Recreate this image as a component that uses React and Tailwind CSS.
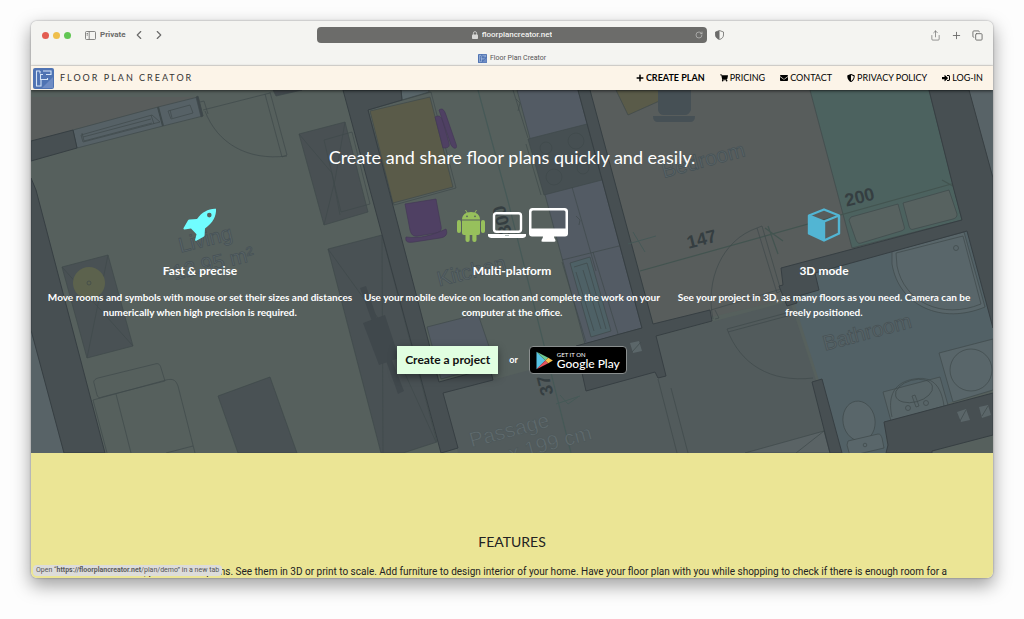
import {
  FaEnvelope,
  FaPlus,
  FaShieldAlt,
  FaShoppingCart,
  FaSignInAlt,
} from "react-icons/fa";
import { ChevronLeft, ChevronRight, Copy, Plus, RotateCw, Share } from "lucide-react";

const navLinks = [
  { label: "CREATE PLAN", Icon: FaPlus, strong: true },
  { label: "PRICING", Icon: FaShoppingCart },
  { label: "CONTACT", Icon: FaEnvelope },
  { label: "PRIVACY POLICY", Icon: FaShieldAlt },
  { label: "LOG-IN", Icon: FaSignInAlt },
];

const Logo = ({ className }) => (
  <svg viewBox="0 0 21 21" className={className} aria-hidden="true">
    <rect width="21" height="21" rx="2" fill="#4f73b3" />
    <path d="M20 9 9 20h11z" fill="#6f8cc4" />
    <path
      d="M7 3H3.500v15H8v-4.500M7 3v2.500M10 3h8v3.500h-5M10 6.500H7.500v5H10M8 13.500v-2h6.500V10"
      fill="none"
      stroke="#d5e4f7"
      strokeWidth="1.100"
    />
  </svg>
);

const RocketIcon = () => (
  <svg viewBox="0 0 34 34" className="h-[34px] w-[34px]" aria-hidden="true">
    <path
      fillRule="evenodd"
      d="M33 .8C26 .3 19 4 14 11l-7.500.500c-.8 0-1.200.4-1.600 1L.6 20c-.4.900 0 1.500.9 1.400l6.500-.9 5.500 5.800-1.400 5.400c-.2 1 .4 1.400 1.300 1l7.200-4c.7-.4 1-.8 1-1.600l.400-6.600C30 15 33.500 8 33 .8zM26.300 4.800a2.300 2.300 0 1 1 0 4.600 2.300 2.300 0 0 1 0-4.600z"
      fill="#70fdff"
    />
  </svg>
);

const AndroidIcon = () => (
  <svg viewBox="0 0 28 33" className="h-[33px] w-7" aria-hidden="true">
    <g fill="#97c05c">
      <path d="M5 10.500C5 6 8.500 3 14 3s9 3 9 7.500z" />
      <path d="M5 11.500h18V24a2 2 0 0 1-2 2H7a2 2 0 0 1-2-2z" />
      <rect x="0" y="11" width="4" height="13" rx="2" />
      <rect x="24" y="11" width="4" height="13" rx="2" />
      <rect x="8.500" y="22" width="4.200" height="11" rx="2" />
      <rect x="15.300" y="22" width="4.200" height="11" rx="2" />
    </g>
    <path d="m8.500 1 2 3.500M19.500 1l-2 3.500" stroke="#97c05c" strokeWidth=".9" />
    <circle cx="10" cy="7.300" r=".9" fill="#56605d" />
    <circle cx="18" cy="7.300" r=".9" fill="#56605d" />
  </svg>
);

const LaptopIcon = () => (
  <svg viewBox="0 0 38 27" className="h-[27px] w-[38px]" aria-hidden="true">
    <rect x="6" y="1.200" width="27" height="18.500" rx="2.500" fill="none" stroke="#fff" strokeWidth="2.400" />
    <path d="M0 22h38v1.500c0 1.500-1.500 2.500-3.500 2.500h-31C1.500 26 0 25 0 23.500z" fill="#fff" />
    <path d="M17 23.500h4" stroke="#9aa" strokeWidth=".8" />
  </svg>
);

const DesktopIcon = () => (
  <svg viewBox="0 0 39 34" className="h-[34px] w-[39px]" aria-hidden="true">
    <path
      fillRule="evenodd"
      d="M3.500 0h32A3.500 3.500 0 0 1 39 3.500v22a3 3 0 0 1-3 3H25c0 2 1.500 2.500 1.500 4 0 .8-.5 1.200-1 1.200h-12c-.6 0-1-.4-1-1.200 0-1.500 1.500-2 1.500-4H3a3 3 0 0 1-3-3v-22A3.500 3.500 0 0 1 3.500 0zM4 2.500A1.500 1.500 0 0 0 2.500 4v16.500h34V4A1.500 1.500 0 0 0 35 2.500z"
      fill="#fff"
    />
  </svg>
);

const CubeIcon = () => (
  <svg viewBox="0 0 34 34" className="h-[34px] w-[34px]" aria-hidden="true">
    <path
      d="M17 1.500 32 7.500v18L17 32.500 2 25.500v-18zM2 7.500l15 6 15-6M17 13.500v19"
      fill="none"
      stroke="#52b5d3"
      strokeWidth="2.400"
      strokeLinejoin="round"
    />
    <path d="m2 7.500 15 6v19L2 25.500z" fill="#52b5d3" />
  </svg>
);

const PlayIcon = () => (
  <svg viewBox="0 0 17 19" className="h-[19px] w-[17px]" aria-hidden="true">
    <path d="M.5.800v17.400L9.300 9.500z" fill="#58c3e4" />
    <path d="M.5.800 12.300 6.700l-3 2.800z" fill="#6fc892" />
    <path d="M.5 18.200 12.300 12.300l-3-2.800z" fill="#e4525d" />
    <path d="m12.300 6.700 4.500 2.800-4.500 2.800-3-2.800z" fill="#f5c04d" />
  </svg>
);

// Rotated plan drawn behind the hero
const FloorPlan = () => (
  <svg
    viewBox="31 90 962 363"
    preserveAspectRatio="xMidYMid slice"
    className="absolute inset-0 h-full w-full"
    aria-hidden="true"
  >
    {/* Rooms */}
    <path d="M31 90h962v363H31z" fill="#56605d" />
    <path d="M31 97h165L31 141z" fill="#595d5c" />
    <path d="m590 90 225-5 40 165-70 50-130 30z" fill="#585d5c" />
    <path d="m443 393 143-38 204-54 50 152H458z" fill="#525b5c" />
    <path d="m815 270 152-39 26 97v62l-109 32 4 31h-46l-47-148z" fill="#526166" />
    <path d="m969 90 24 88V90zM31 330l33 123H31z" fill="#586367" />

    <g stroke="#3f494b" strokeWidth=".7" fill="none">
      {/* Windows and balcony door */}
      <path d="m73 130 85-23 5 19-86 22z" fill="#566166" />
      <path d="m158 107 40-10 5 19-40 10z" fill="#566166" />
      <path d="m81 135 71-20 8 7-77 20zM82 133l2 8 68-18M83 137l68-18M151 115l3 9M168 111l22-6 3 8-22 6zM170 110l2 8" />
      <path d="m158 107 5 19" strokeWidth="2" />
      <path d="m196 97 2-1 5 20-2 1z" fill="#3e464a" />
      <path d="m200 102 4-1 4 13M203 110l67-17M205 111c12 32 42 50 82 45M265 94l17 63 5-2-17-63" />
      <path d="m273 90 3 6 26-6z" fill="#42494d" />

      {/* Living room */}
      <path d="m62 267 46-12 25 91-46 12z" fill="#495154" />
      <path d="m62 267 71 79M108 255 87 358" />
      <circle cx="89" cy="283" r="16" fill="#5c624d" stroke="none" />
      <circle cx="89" cy="283" r="2" />
      <path d="M98 378c-3 1-5 3-4 5l3 12c1 3 3 3 5 2l63-16-4-13c-1-4-3-5-6-4z" />
      <path d="m93 400 73-20c8-2 10 1 12 6l17 67M93 400l14 53M116 394l15 59M166 453l27-7" />
      <path d="m218 396 52-19 27 76h-59z" fill="#495154" />
      <path d="m299 134 46-12 23 90-44 13z" fill="#495053" />
      <path d="m324 140 28-8 18 72-29 8zM299 134l33 39 8 42M324 225l11-45 10-58" />
      <path d="m328 249 54-14 55 207-34 11h-22z" fill="#495154" />
      <path d="m328 249 55 76 53 117M382 235l1 218" />
      <path d="m360 288 6-2 21 62 17 43-6 3zM363 323l22-8 14 43-20 7z" fill="#40484c" stroke="none" />

      {/* Kitchen */}
      <path d="m401 90 1 10 27-8v-2z" fill="#59666a" />
      <path d="m368 110 63-18 25 96-62 17z" />
      <path d="m370 111 60-14 23 90-60 16z" fill="#5a5b49" />
      <g fill="#4f4063" stroke="#443856">
        <path d="M435 117c4-2 6-1 8 5l6 21c1 4-1 5-6 5z" />
        <path d="M439 110c3-2 5-1 7 5l10 29c2 5-2 6-5 1z" />
        <path d="m405 204 31-5 5 27c1 4-1 6-5 7l-18 3c-5 1-7-2-8-6z" />
        <path d="M406 237c14 2 27-2 40-8 2 5 0 8-6 9l-26 4c-6 1-9 0-8-5z" />
      </g>
      <path d="m478 90 30 111 63 252" stroke="#465957" strokeWidth="1.200" />
      <path d="m517 90h61l64 238-57 16z" fill="#535b64" />
      <path d="m528 139 59-15 15 56-58 15z" fill="#464f52" />
      <circle cx="546" cy="148" r="6" />
      <circle cx="576" cy="141" r="8" />
      <circle cx="554" cy="177" r="8" />
      <circle cx="583" cy="168" r="6" />
      <path d="m513 90 15 48M526 144l15 51M562 260l57-14M593 252l26 85M572 187l24 84M562 262l24 80M516 99l4 4-2 8M576 216l4 4-1 5" />
      <path d="m570 263 20-6 21 74-20 6z" fill="#4e6166" />
      <path d="m574 267 13-4 19 66M576 272l18 59M583 270l18 59" />
      <path d="m427 327 51-13 17 50-54 15z" fill="#535b64" />

      {/* Bedroom */}
      <path d="m616 90 12 25 56-25z" fill="#5a5b49" />
      <path d="M658 90h33v20q-2 5-6 5h-21q-5 0-6-5zM653 116h42q0 6-5 6h-32q-5 0-5-6z" fill="#465055" stroke="none" />
      <path d="m810 90 119 0 33 130-110 28z" fill="#4c625f" />
      <path d="m851 217 47-13 6 22c1 3 0 4-3 5l-40 12c-3 1-4-1-5-3l-7-20zM903 203l46-13 8 24c0 3-1 4-4 5l-39 10c-3 1-4 0-5-3z" fill="#576260" />
      <path d="m640 271 315-88M768 226l10 28M765 228l18 13M942 180l18 10" stroke="#435450" strokeWidth="1.200" />
      <path d="m757 228 5-2 19 65-4 2zM757 228c-35 12-52 52-44 91M711 310l70-21M727 329l63-17M728 332l63-17M727 329c13 35 43 54 86 49M715 319l4-1-4-8" />

      {/* Bathroom */}
      <path d="M892 251 964 232l21 75c-43 18-86-1-93-43z" fill="#59666a" />
      <path d="m896 253 67-17 18 68c-39 16-77-2-84-38z" />
      <circle cx="956" cy="248" r="2.500" />
      <path d="m939 353 54-14v51l-40 12z" fill="#59666a" />
      <circle cx="971" cy="370" r="21" />
      <path d="m883 392 57-15 8 28-57 16z" fill="#586568" />
      <path d="M892 417c-5-22 3-35 22-38 17-3 27 5 30 27" />
      <ellipse cx="914" cy="391" rx="19" ry="11" transform="rotate(-15 914 391)" />
      <path d="m912 396 3-1 4 11-3 1z" />
      <circle cx="908" cy="408" r="2.500" />
      <circle cx="926" cy="403" r="2.500" />
      <ellipse cx="859" cy="421" rx="16" ry="20" transform="rotate(-10 859 421)" fill="#59666a" />
      <path d="m848 441 30-7c3 0 3 2 4 4l2 10-34 8-3-11z" fill="#59666a" />
      <circle cx="865" cy="445" r="1.800" />
      <path d="m745 453 79-22 6 22z" fill="#5a6365" />
      <path d="m796 453 28-22M671 388l17 65M658 379l19 74" />
    </g>

    {/* Walls */}
    <g fill="#474f52" stroke="#373f43" strokeWidth="1">
      <path d="m31 141 42-11 4 18-46 13zM31 178l5 12 69 263H64L31 330z" />
      <path d="M343 90h58l1 10-34 10 71 272 51-14 3 12-50 13 15 55-17 5z" />
      <path d="m578 90 12 0 63 234 57-14 2 11-56 15 10 40-8 2-3-6-69 19-10-45 66-18z" />
      <path d="m781 268 181-48-8-30-25-100h40l24 88v150l-26-97-152 42 4 17-24 7 2 6-10 3-8-20 4-1z" />
      <path d="m812 382 10-3 20 74h-12zM884 422l109-29v42l-61 16v2h-46l2-8z" />
    </g>
    <path d="m630 343 9-2 3 10-9 2zM957 412l9-3 4 11-9 2zM979 407l9-2 3 10-9 3z" fill="#5b6669" />
    <path d="m632 352 9-10M960 421l6-11M982 416l6-10" stroke="#3f494b" strokeWidth=".7" />
    <path d="m633 232 12 20M628 244l28-8M560 395l8 9 10-7M556 404l24-8" stroke="#465957" fill="none" />

    {/* Labels */}
    <g fontFamily="Liberation Sans, sans-serif" fontSize="21" textAnchor="middle">
      <g fill="#5a6568" stroke="#465155" strokeWidth=".7">
        <text transform="translate(207 246) rotate(-14)">Living</text>
        <text transform="translate(215 270) rotate(-14)">12,95 m²</text>
        <text transform="translate(473 278) rotate(-14)">Kitchen</text>
        <text transform="translate(705 167) rotate(-15)">Bedroom</text>
        <text transform="translate(869 339) rotate(-15)">Bathroom</text>
      </g>
      <g fill="#606b6e" stroke="#4a5557" strokeWidth=".5">
        <text transform="translate(511 437) rotate(-15)">Passage</text>
        <text transform="translate(552 450) rotate(-15)">x 199 cm</text>
      </g>
      <g fill="#353e41" fontSize="18" fontWeight="bold">
        <text transform="translate(703 245) rotate(-14)">147</text>
        <text transform="translate(861 203) rotate(-14)">200</text>
        <text transform="translate(508 219) rotate(-104)">300</text>
        <text transform="translate(551 384) rotate(-104)">37</text>
      </g>
    </g>
  </svg>
);

const Feature = ({ title, text, children }) => (
  <div className="flex flex-1 flex-col items-center text-center">
    <div className="flex h-9 items-center gap-[3px]">{children}</div>
    <h2 className="mt-5 text-[12px] leading-4 font-bold">{title}</h2>
    <p className="mt-[11px] text-[10px] leading-[15px] font-bold">{text}</p>
  </div>
);

const BrowserBar = () => (
  <header className="border-b border-[#e6e4df] bg-[#f4f4f1] pt-1.5 font-[Roboto,sans-serif] text-[#6b6b6a]">
    <div className="grid grid-cols-[1fr_390px_1fr] items-center">
      <div className="flex items-center pl-[11px]">
        <div className="flex gap-1">
          <span className="size-[7px] rounded-full bg-[#e35d51]" />
          <span className="size-[7px] rounded-full bg-[#efbf4c]" />
          <span className="size-[7px] rounded-full bg-[#62c654]" />
        </div>
        <button className="ml-3.5 flex items-center gap-1 text-[8px] font-bold">
          <svg viewBox="0 0 11 9" className="h-[9px] w-[11px]" aria-hidden="true">
            <path d="M1.500.5h8a1 1 0 0 1 1 1v6a1 1 0 0 1-1 1h-8a1 1 0 0 1-1-1v-6a1 1 0 0 1 1-1zM4.200.5v8M1.600 2.500h1.400M1.600 4h1.400" fill="none" stroke="currentColor" strokeWidth=".8" />
          </svg>
          Private
        </button>
        <button className="ml-1.5" aria-label="Back">
          <ChevronLeft size={14} strokeWidth={2} />
        </button>
        <button className="ml-1.5" aria-label="Forward">
          <ChevronRight size={14} strokeWidth={2} />
        </button>
      </div>

      <div className="flex h-4 items-center rounded bg-[#6c6c6a] px-1 text-[#f1f1ef]">
        <div className="flex flex-1 items-center justify-center gap-1 pl-2">
          <svg viewBox="0 0 6 8" className="h-2 w-1.5" aria-hidden="true">
            <rect y="3.500" width="6" height="4.500" rx=".8" fill="#d8d8d6" />
            <path d="M1.400 4V2.200a1.600 1.600 0 0 1 3.200 0V4" fill="none" stroke="#d8d8d6" strokeWidth=".8" />
          </svg>
          <input
            aria-label="Address"
            className="field-sizing-content bg-transparent text-[8px] leading-3 font-medium outline-none"
            defaultValue="floorplancreator.net"
          />
        </div>
        <button aria-label="Reload">
          <RotateCw size={8} className="text-[#c4c4c2]" />
        </button>
      </div>

      <div className="flex items-center justify-between pr-2.5 pl-2">
        <button aria-label="Privacy report">
          <svg viewBox="0 0 9 10" className="h-2.5 w-[9px]" aria-hidden="true">
            <path d="M4.500.5 8.500 2v3c0 2.200-1.500 3.700-4 4.600C2 8.700.5 7.200.5 5V2z" fill="none" stroke="currentColor" strokeWidth=".8" />
            <path d="M4.500.5v9C2 8.700.5 7.200.5 5V2z" fill="currentColor" />
          </svg>
        </button>
        <div className="flex items-center gap-2.5">
          <button aria-label="Share">
            <Share size={11} strokeWidth={1.5} />
          </button>
          <button aria-label="New tab">
            <Plus size={11} strokeWidth={2} />
          </button>
          <button aria-label="Tab overview">
            <Copy size={11} strokeWidth={2} />
          </button>
        </div>
      </div>
    </div>
    <div className="mt-2 flex h-[14px] items-center justify-center gap-[3px] text-[7px] text-[#555]">
      <Logo className="size-[9px]" />
      <span>Floor Plan Creator</span>
    </div>
  </header>
);

const App = () => {
  return (
    <div className="h-screen bg-[#fdfdfd] px-[31px] pt-[21px] pb-[41px] font-[Lato,sans-serif]">
      <div className="relative flex h-full flex-col overflow-hidden rounded-md shadow-[0_0_2px_rgba(0,0,0,0.4),0_7px_18px_1px_rgba(0,0,0,0.36)]">
        <BrowserBar />

        <nav className="relative z-10 flex h-6 shrink-0 items-center justify-between bg-[#fcf4e8] pr-2.5 pl-0.5 text-black shadow-[0_1px_3px_rgba(0,0,0,0.6)]">
          <a href="#home" className="flex items-center gap-1.5 text-[9px] tracking-[2px] text-[#333]">
            <Logo className="size-[21px]" />
            FLOOR PLAN CREATOR
          </a>
          <div className="flex items-center gap-[15px] text-[9px]">
            {navLinks.map(({ label, Icon, strong }) => (
              <a
                key={label}
                href="#nav"
                className={`flex items-center gap-0.5 ${strong ? "font-bold" : ""}`}
              >
                <Icon size={8} />
                {label}
              </a>
            ))}
          </div>
        </nav>

        <section className="relative shrink-0 px-[13px] pt-[53px] pb-[79px] text-white">
          <FloorPlan />
          <div className="relative">
            <h1 className="text-center text-[18px] leading-7">
              Create and share floor plans quickly and easily.
            </h1>
            <div className="mt-9 flex">
              <Feature
                title="Fast & precise"
                text="Move rooms and symbols with mouse or set their sizes and distances numerically when high precision is required."
              >
                <RocketIcon />
              </Feature>
              <Feature
                title="Multi-platform"
                text="Use your mobile device on location and complete the work on your computer at the office."
              >
                <AndroidIcon />
                <LaptopIcon />
                <DesktopIcon />
              </Feature>
              <Feature
                title="3D mode"
                text="See your project in 3D, as many floors as you need. Camera can be freely positioned."
              >
                <CubeIcon />
              </Feature>
            </div>
            <div className="mt-[26px] flex items-center justify-center gap-[11px]">
              <a
                href="#create"
                className="bg-[#e1ffe1] px-2 py-1.5 text-[12px] leading-4 font-bold text-[#111] shadow-[0_3px_8px_rgba(0,0,0,0.4)]"
              >
                Create a project
              </a>
              <span className="text-[9px] font-bold">or</span>
              <a
                href="#play"
                className="flex h-7 items-center gap-1 rounded border border-[#8a8f8f] bg-black px-1.5"
              >
                <PlayIcon />
                <span className="flex flex-col">
                  <span className="text-[6px] leading-[7px]">GET IT ON</span>
                  <span className="text-[12px] leading-3 font-medium">Google Play</span>
                </span>
              </a>
            </div>
          </div>
        </section>

        <section className="min-h-0 flex-1 overflow-hidden bg-[#ebe595] px-3 pt-20 text-center text-[#222]">
          <h2 className="text-[14px] leading-[18px]">FEATURES</h2>
          <p className="mt-3 font-[Roboto,sans-serif] text-[10px] leading-[18px]">
            Create detailed, precise floor plans. See them in 3D or print to scale. Add furniture to
            design interior of your home. Have your floor plan with you while shopping to check if
            there is enough room for a
          </p>
        </section>

        <div className="absolute bottom-0.5 left-0.5 rounded-sm bg-[#dcdcda] px-[3px] font-[Roboto,sans-serif] text-[7px] leading-[11px] text-[#555]">
          Open “<b className="font-semibold">https://floorplancreator.net</b>/plan/demo” in a new tab
        </div>
      </div>
    </div>
  );
};

export default App;
